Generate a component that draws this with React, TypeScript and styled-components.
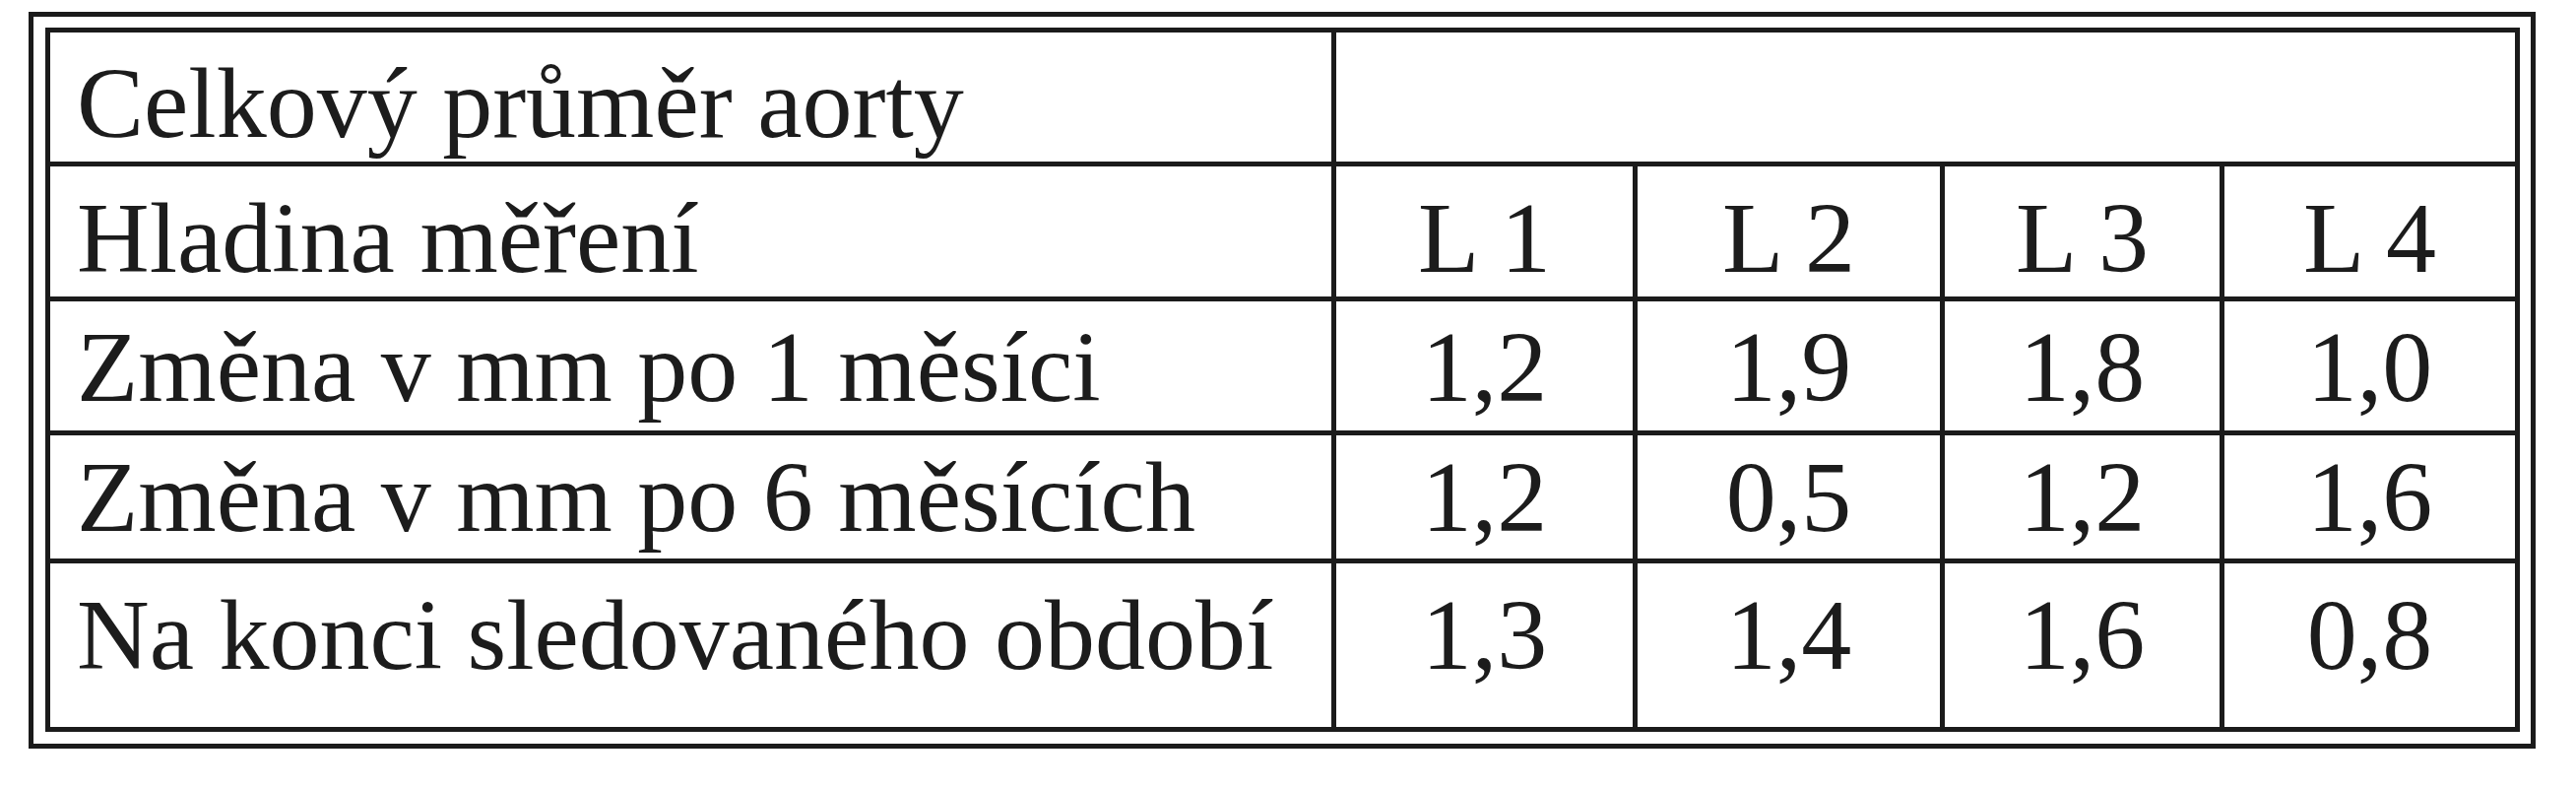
import React from 'react';
import styled, { createGlobalStyle } from 'styled-components';

const GlobalStyle = createGlobalStyle`
  html, body {
    margin: 0;
    padding: 0;
    background: #ffffff;
  }
  body {
    font-family: 'Liberation Serif', 'Times New Roman', serif;
    color: #1c1c1c;
  }
`;

const Page = styled.div`
  padding: 12px 0 0 29px;
  width: 2616px;
  box-sizing: border-box;
`;

const Frame = styled.div`
  width: 2546px;
  box-sizing: border-box;
  border: 5px solid #1b1b1b;
  padding: 11px 11px 12px 12px;
`;

const Table = styled.div`
  display: flex;
  flex-direction: column;
  gap: 5px;
  padding: 5px;
  background: #1b1b1b;
`;

const Row = styled.div<{ $h: number; $pad: number }>`
  display: grid;
  grid-template-columns: 1301px 301px 307px 279px 295px;
  gap: 5px;
  height: ${(p) => p.$h}px;

  & > * {
    padding-top: ${(p) => p.$pad}px;
  }
`;

const Cell = styled.div<{ $span?: number; $center?: boolean }>`
  background: #ffffff;
  box-sizing: border-box;
  font-size: 102px;
  line-height: 1;
  white-space: nowrap;
  grid-column: span ${(p) => p.$span || 1};
  text-align: ${(p) => (p.$center ? 'center' : 'left')};
  padding-left: ${(p) => (p.$center ? 0 : 27)}px;
`;

const rows = [
  { label: 'Hladina měření', values: ['L 1', 'L 2', 'L 3', 'L 4'], h: 132, pad: 22 },
  { label: 'Změna v mm po 1 měsíci', values: ['1,2', '1,9', '1,8', '1,0'], h: 131, pad: 16 },
  { label: 'Změna v mm po 6 měsících', values: ['1,2', '0,5', '1,2', '1,6'], h: 125, pad: 12 },
  { label: 'Na konci sledovaného období', values: ['1,3', '1,4', '1,6', '0,8'], h: 166, pad: 22 },
];

const App = () => {
  return (
    <>
      <GlobalStyle />
      <Page>
        <Frame>
          <Table>
            <Row $h={131} $pad={21}>
              <Cell>Celkový průměr aorty</Cell>
              <Cell $span={4} />
            </Row>
            {rows.map((row) => (
              <Row key={row.label} $h={row.h} $pad={row.pad}>
                <Cell>{row.label}</Cell>
                {row.values.map((value, index) => (
                  <Cell key={index} $center>
                    {value}
                  </Cell>
                ))}
              </Row>
            ))}
          </Table>
        </Frame>
      </Page>
    </>
  );
};

export default App;
